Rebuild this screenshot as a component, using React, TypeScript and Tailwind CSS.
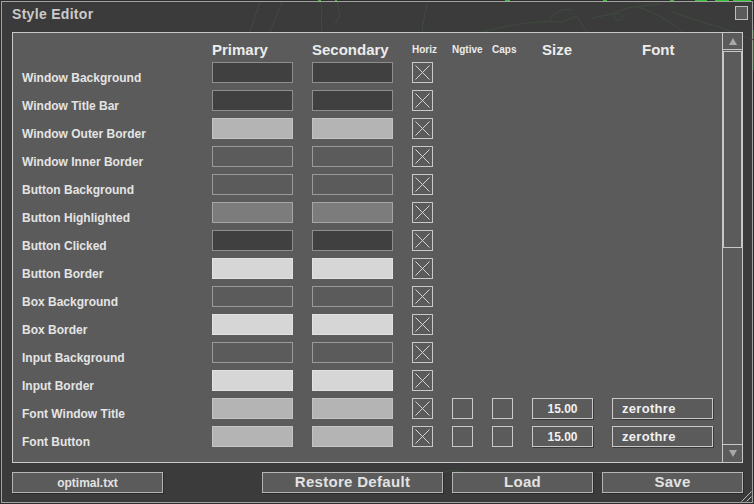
import React from "react";

type Row = { label: string; cls: string; font?: boolean };

const rows: Row[] = [
  { label: "Window Background", cls: "bg-[#404040] border-[#8e8e8e]" },
  { label: "Window Title Bar", cls: "bg-[#404040] border-[#8e8e8e]" },
  { label: "Window Outer Border", cls: "bg-[#b4b4b4] border-[#c4c4c4]" },
  { label: "Window Inner Border", cls: "bg-[#5b5b5b] border-[#9a9a9a]" },
  { label: "Button Background", cls: "bg-[#5b5b5b] border-[#9a9a9a]" },
  { label: "Button Highlighted", cls: "bg-[#7c7c7c] border-[#a6a6a6]" },
  { label: "Button Clicked", cls: "bg-[#404040] border-[#8e8e8e]" },
  { label: "Button Border", cls: "bg-[#d6d6d6] border-[#e2e2e2]" },
  { label: "Box Background", cls: "bg-[#5b5b5b] border-[#9a9a9a]" },
  { label: "Box Border", cls: "bg-[#d6d6d6] border-[#e2e2e2]" },
  { label: "Input Background", cls: "bg-[#5b5b5b] border-[#9a9a9a]" },
  { label: "Input Border", cls: "bg-[#d6d6d6] border-[#e2e2e2]" },
  { label: "Font Window Title", cls: "bg-[#b4b4b4] border-[#c4c4c4]", font: true },
  { label: "Font Button", cls: "bg-[#b4b4b4] border-[#c4c4c4]", font: true },
];

function Check({ x }: { x?: boolean }) {
  return (
    <div className="w-[21px] h-[21px] border border-[#c8c8c8] shrink-0">
      {x && (
        <svg width="19" height="19" viewBox="0 0 19 19" className="block">
          <path d="M2.5 2.5L16.5 16.5M16.5 2.5L2.5 16.5" stroke="#d4d4d4" strokeWidth="1" fill="none" />
        </svg>
      )}
    </div>
  );
}

function Btn({ w, text, size }: { w: string; text: string; size: string }) {
  return (
    <div
      className={`${w} h-[21px] border border-[#b4b4b4] bg-[#5b5b5b] shadow-[1px_1px_0_#2a2a2a] flex items-center justify-center font-bold text-[#e2e2e2] ${size}`}
    >
      {text}
    </div>
  );
}

export default function App() {
  return (
    <div className="relative w-[754px] h-[504px] bg-[#2e2e2e] p-px font-['Liberation_Sans',Arial,sans-serif] overflow-hidden">
      <svg className="absolute left-0 top-0" width="754" height="504">
        <rect x="318" y="0" width="3" height="1" fill="#2fbf2f" />
        <rect x="335" y="0" width="2" height="1" fill="#2fbf2f" />
        <rect x="505" y="0" width="5" height="1" fill="#2fbf2f" />
        <rect x="603" y="0" width="4" height="1" fill="#2fbf2f" />
        <rect x="670" y="0" width="4" height="1" fill="#2fbf2f" />
        <rect x="695" y="0" width="12" height="1" fill="#2fbf2f" />
        <rect x="715" y="0" width="14" height="1" fill="#2fbf2f" />
        <rect x="733" y="0" width="18" height="1" fill="#2fbf2f" />
        <rect x="753" y="30" width="1" height="40" fill="#2a6a2a" />
      </svg>
      <div className="relative h-full border border-[#a2a2a2] bg-[#3b3b3b] flex flex-col">
        <svg className="absolute left-0 top-0 pointer-events-none" width="752" height="502">
          <g stroke="#3e4c3e" strokeWidth="1" fill="none">
            <path d="M258 0 L248 30" />
            <path d="M280 0 L268 30" />
            <path d="M318 0 C322 8 318 14 320 30" />
            <path d="M335 0 L338 14 L333 22" />
            <path d="M425 2 C423 12 421 20 420 30" />
            <path d="M480 30 C510 22 540 18 560 20 L575 14 L585 30" />
            <path d="M548 18 C552 10 560 6 570 8" />
            <path d="M590 16 L610 12 L625 6 L640 4 L660 2" />
            <path d="M612 14 C612 18 618 20 620 16 C622 12 614 10 612 14" />
            <path d="M634 4 C650 10 668 18 680 30" />
            <path d="M670 10 L700 20 L720 26 L752 38" />
            <path d="M420 480 C440 470 450 466 460 470" />
            <path d="M595 470 L640 476 L700 470" />
          </g>
        </svg>
        <div className="relative h-[30px] flex justify-between">
          <span className="ml-[10px] mt-[5px] text-[14px] leading-[14px] font-bold text-[#cacaca] tracking-[0.3px]">
            Style Editor
          </span>
          <div className="mt-[4px] mr-[4px] w-[13px] h-[14px] border border-[#bdbdbd] bg-[#5b5b5b]" />
        </div>

        <div className="relative ml-[10px] w-[731px] h-[431px] border border-[#c8c8c8] bg-[#5b5b5b] flex">
          <div className="flex-1 pl-[9px] flex flex-col">
            <div className="h-[29px] flex items-end pb-[5px] font-bold text-[#ececec]">
              <div className="w-[190px]" />
              <div className="w-[100px] text-[15px] leading-[15px]">Primary</div>
              <div className="w-[100px] text-[15px] leading-[15px]">Secondary</div>
              <div className="w-[40px] text-[10px] leading-[10px] mb-[2px]">Horiz</div>
              <div className="w-[40px] text-[10px] leading-[10px] mb-[2px]">Ngtive</div>
              <div className="w-[40px] text-[10px] leading-[10px] mb-[2px]">Caps</div>
              <div className="w-[80px] pl-[10px] text-[15px] leading-[15px]">Size</div>
              <div className="pl-[30px] text-[15px] leading-[15px]">Font</div>
            </div>
            <div className="flex flex-col gap-[7px]">
              {rows.map((r) => (
                <div key={r.label} className="flex h-[21px]">
                  <div className="w-[190px] flex items-end">
                    <span className="text-[12px] leading-[12px] font-bold text-[#e4e4e4] translate-y-[1px]">
                      {r.label}
                    </span>
                  </div>
                  <div className={`w-[81px] h-[21px] border mr-[19px] ${r.cls}`} />
                  <div className={`w-[81px] h-[21px] border mr-[19px] ${r.cls}`} />
                  <Check x />
                  {r.font && (
                    <>
                      <div className="ml-[19px]">
                        <Check />
                      </div>
                      <div className="ml-[19px]">
                        <Check />
                      </div>
                      <div className="ml-[19px] w-[61px] h-[21px] border border-[#c8c8c8] shadow-[1px_1px_0_#3a3a3a] flex items-center justify-center text-[12px] font-bold text-[#f0f0f0]">
                        15.00
                      </div>
                      <div className="ml-[19px] w-[101px] h-[21px] border border-[#c8c8c8] shadow-[1px_1px_0_#3a3a3a] flex items-center pl-[9px] text-[13px] font-bold text-[#f0f0f0] tracking-[0.3px]">
                        zerothre
                      </div>
                    </>
                  )}
                </div>
              ))}
            </div>
          </div>
          <div className="w-[20px] border-l border-[#c8c8c8] flex flex-col">
            <div className="h-[17px] border-b border-[#c8c8c8] flex items-center justify-center">
              <svg width="8" height="7" viewBox="0 0 8 7">
                <path d="M4 0L8 7H0Z" fill="#a8a8a8" />
              </svg>
            </div>
            <div className="mt-[1px] h-[197px] border border-[#c8c8c8]" />
            <div className="flex-1" />
            <div className="h-[18px] border-t border-[#c8c8c8] flex items-center justify-center">
              <svg width="8" height="7" viewBox="0 0 8 7">
                <path d="M0 0H8L4 7Z" fill="#a8a8a8" />
              </svg>
            </div>
          </div>
        </div>

        <div className="relative mt-[9px] ml-[10px] flex h-[21px]">
          <Btn w="w-[151px]" text="optimal.txt" size="text-[12px]" />
          <div className="ml-[99px]">
            <Btn w="w-[181px]" text="Restore Default" size="text-[15px] tracking-[0.3px]" />
          </div>
          <div className="ml-[9px]">
            <Btn w="w-[141px]" text="Load" size="text-[15px] tracking-[0.3px]" />
          </div>
          <div className="ml-[9px]">
            <Btn w="w-[141px]" text="Save" size="text-[15px] tracking-[0.3px]" />
          </div>
        </div>

        <svg className="absolute right-0 bottom-0" width="12" height="12" viewBox="0 0 12 12">
          <path d="M11.5 1.5L1.5 11.5M11.5 6.5L6.5 11.5" stroke="#bdbdbd" strokeWidth="1" fill="none" />
        </svg>
      </div>
    </div>
  );
}
